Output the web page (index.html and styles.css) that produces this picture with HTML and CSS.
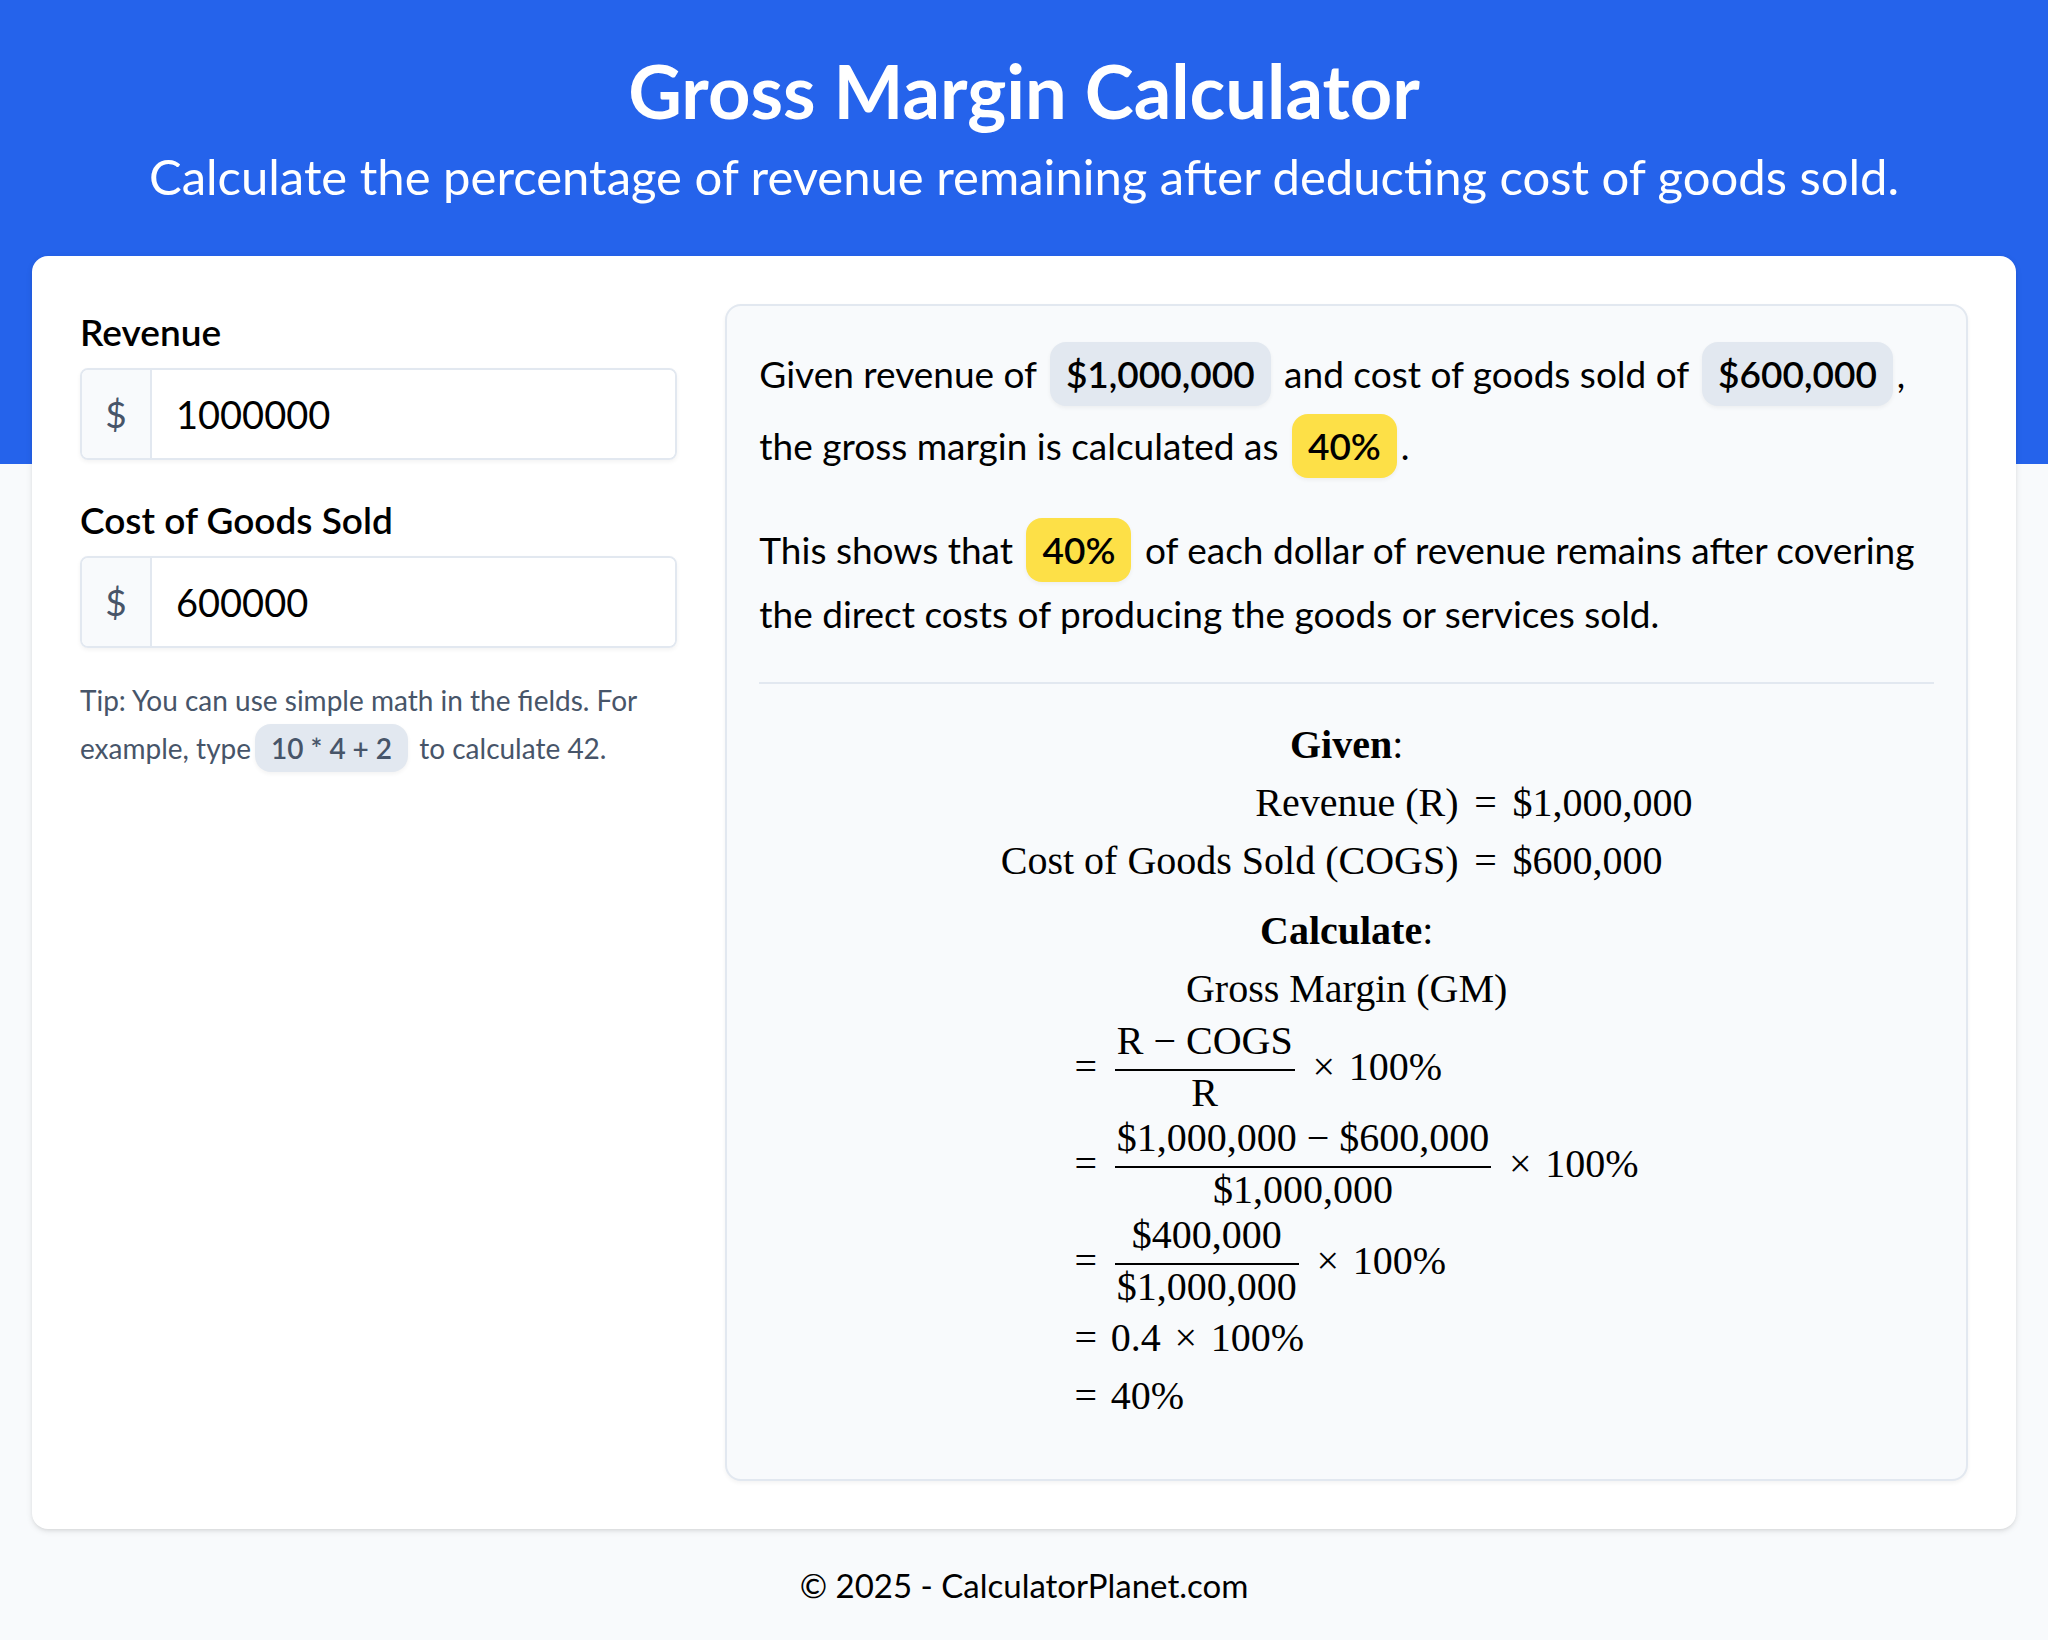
FILE: index.html
```html
<!DOCTYPE html>
<html lang="en">
<head>
<meta charset="utf-8">
<meta name="viewport" content="width=device-width, initial-scale=1">
<title>Gross Margin Calculator</title>
<link rel="stylesheet" href="styles.css">
</head>
<body>
<header class="hero">
  <h1 class="hero-title">Gross Margin Calculator</h1>
  <p class="hero-subtitle">Calculate the percentage of revenue remaining after deducting cost of goods sold.</p>
</header>

<main class="card">
  <form class="fields">
    <div class="field">
      <label class="field-label" for="revenue">Revenue</label>
      <div class="money">
        <span class="money-sign">$</span>
        <input class="money-input" id="revenue" type="text" inputmode="decimal" value="1000000">
      </div>
    </div>
    <div class="field">
      <label class="field-label" for="cogs">Cost of Goods Sold</label>
      <div class="money">
        <span class="money-sign">$</span>
        <input class="money-input" id="cogs" type="text" inputmode="decimal" value="600000">
      </div>
    </div>
    <p class="tip">Tip: You can use simple math in the fields. For example, type<span class="pill pill-small">10 * 4 + 2</span> to calculate 42.</p>
  </form>

  <section class="results">
    <p class="summary">Given revenue of <span class="pill">$1,000,000</span> and cost of goods sold of <span class="pill">$600,000</span>, the gross margin is calculated as <span class="pill pill-result">40%</span>.</p>
    <p class="summary">This shows that <span class="pill pill-result">40%</span> of each dollar of revenue remains after covering the direct costs of producing the goods or services sold.</p>
    <hr class="divider">
    <div class="math">
      <div class="math-heading"><b>Given</b>:</div>
      <div class="givens">
        <span class="given-name">Revenue (R)</span><span class="op">=</span><span>$1,000,000</span>
        <span class="given-name">Cost of Goods Sold (COGS)</span><span class="op">=</span><span>$600,000</span>
      </div>
      <div class="math-heading math-heading-next"><b>Calculate</b>:</div>
      <div class="math-heading">Gross Margin (GM)</div>
      <div class="steps">
        <div class="step step-fraction">
          <span class="op">=</span>
          <span class="fraction"><span class="numerator">R − COGS</span><span class="denominator">R</span></span>
          <span class="op">×</span><span>100%</span>
        </div>
        <div class="step step-fraction">
          <span class="op">=</span>
          <span class="fraction"><span class="numerator">$1,000,000 − $600,000</span><span class="denominator">$1,000,000</span></span>
          <span class="op">×</span><span>100%</span>
        </div>
        <div class="step step-fraction">
          <span class="op">=</span>
          <span class="fraction"><span class="numerator">$400,000</span><span class="denominator">$1,000,000</span></span>
          <span class="op">×</span><span>100%</span>
        </div>
        <div class="step"><span class="op">=</span><span>0.4</span><span class="op">×</span><span>100%</span></div>
        <div class="step"><span class="op">=</span><span>40%</span></div>
      </div>
    </div>
  </section>
</main>

<footer class="footer">© 2025 - CalculatorPlanet.com</footer>
</body>
</html>
```
FILE: styles.css
```css
* {
  box-sizing: border-box;
}

body {
  margin: 0;
  background: #f8fafc;
  color: #000;
  font-family: Lato, "Open Sans", sans-serif;
  font-size: 37px;
  line-height: 56px;
}

h1,
p {
  margin: 0;
}

/* Blue band; the card overlaps its lower part */
.hero {
  padding: 46px 32px 252px;
  background: #2563eb;
  color: #fff;
  text-align: center;
}

.hero-title {
  font-size: 74px;
  font-weight: 700;
  line-height: 90px;
}

.hero-subtitle {
  margin-top: 4px;
  font-size: 49px;
  line-height: 72px;
}

.card {
  display: grid;
  grid-template-columns: repeat(3, 1fr);
  gap: 48px;
  margin: -208px 32px 0;
  padding: 48px;
  border-radius: 16px;
  background: #fff;
  box-shadow: 0 2px 6px rgba(0, 0, 0, 0.1), 0 2px 4px -2px rgba(0, 0, 0, 0.1);
}

.field {
  margin-bottom: 32px;
}

.field-label {
  display: block;
  margin-bottom: 8px;
  font-weight: 600;
}

.money {
  display: flex;
  height: 92px;
  border: 2px solid #e2e8f0;
  border-radius: 8px;
  overflow: hidden;
  box-shadow: 0 2px 4px rgba(0, 0, 0, 0.05);
}

.money-sign {
  display: flex;
  align-items: center;
  justify-content: center;
  width: 70px;
  border-right: 2px solid #e2e8f0;
  background: #f8fafc;
  color: #475569;
}

.money-input {
  flex: 1;
  min-width: 0;
  padding: 0 24px;
  border: 0;
  outline: 0;
  background: #fff;
  color: #000;
  font: inherit;
  font-size: 38px;
}

.tip {
  margin-top: -4px;
  color: #475569;
  font-size: 28px;
  line-height: 48px;
}

.pill {
  display: inline-block;
  margin: 4px;
  padding: 8px 16px;
  border-radius: 16px;
  background: #e2e8f0;
  box-shadow: 0 2px 4px rgba(0, 0, 0, 0.05);
  font-weight: 600;
  line-height: 48px;
}

.pill-small {
  margin: 0 4px;
  padding: 0 16px;
}

.pill-result {
  background: #fde047;
}

.results {
  grid-column: span 2;
  padding: 32px;
  border: 2px solid #e2e8f0;
  border-radius: 16px;
  background: #f8fafc;
  box-shadow: 0 2px 4px rgba(0, 0, 0, 0.05);
}

.summary {
  margin-bottom: 32px;
}

.divider {
  height: 2px;
  margin: 40px 0 0;
  border: 0;
  background: #e2e8f0;
}

/* Worked solution */
.math {
  display: flex;
  flex-direction: column;
  align-items: center;
  padding: 32px 0 22px;
  font-family: "Liberation Serif", serif;
  font-size: 40px;
  line-height: 58px;
}

.math-heading-next {
  margin-top: 12px;
}

.givens {
  display: grid;
  grid-template-columns: auto 30px auto;
  column-gap: 12px;
}

.given-name {
  text-align: right;
}

.op {
  width: 30px;
  text-align: center;
}

.steps {
  padding-left: 16px;
}

.step {
  display: flex;
  align-items: center;
  gap: 10px;
}

.step-fraction {
  padding: 3px 0 2px;
}

.fraction {
  display: flex;
  flex-direction: column;
  margin: 0 4px;
  line-height: 40px;
  text-align: center;
}

.numerator {
  padding: 0 2px 8px;
  border-bottom: 2px solid #000;
}

.denominator {
  padding: 2px 2px 0;
}

.footer {
  padding: 28px 32px;
  font-size: 33px;
  text-align: center;
}
```
